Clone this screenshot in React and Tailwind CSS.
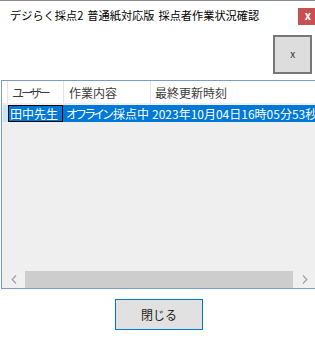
import React from "react";

const font = { fontFamily: '"Noto Sans CJK JP", "Noto Sans", sans-serif' };

export default function App() {
  return (
    <div className="w-[315px] h-[339px] bg-white flex overflow-hidden" style={font}>
      <div className="w-[2px] h-full bg-[#e4e4e4]" />
      <div className="flex-1 flex flex-col border-t border-[#8c8c8c]">
        {/* title row */}
        <div className="h-[34px] flex items-start justify-between">
          <div className="pl-[10px] pt-[6px] text-[11.2px] leading-[16px] text-black whitespace-nowrap flex">
            <span>デジらく採点2</span>
            <span className="ml-[4px]">普通紙対応版</span>
            <span className="ml-[4px]">採点者作業状況確認</span>
          </div>
          <div className="mt-[7px] mr-[1px] w-[19px] h-[17px] bg-[#c75050] flex items-center justify-center text-white text-[11px] font-bold leading-none pb-[2px]">
            x
          </div>
        </div>
        {/* square x button */}
        <div className="flex justify-end pr-[6px]">
          <div className="w-[39px] h-[39px] bg-[#dddddd] border-2 border-[#777777] flex items-center justify-center text-[10px] text-[#333] leading-none pb-[2px]">
            x
          </div>
        </div>
        {/* list view */}
        <div className="mt-[6px] ml-[1px] h-[209px] border border-[#7a9cc6] flex flex-col bg-[#efefef]">
          <div className="h-[23px] bg-white flex text-[12px] text-[#3c3c3c] leading-[23px] border-b border-[#f0f0f0]">
            <div className="w-[6px] border-r border-[#e5e5e5]" />
            <div className="w-[56px] border-r border-[#e5e5e5] pl-[4px] whitespace-nowrap tracking-[-3px]">ユーザー</div>
            <div className="w-[87px] border-r border-[#e5e5e5] pl-[5px] whitespace-nowrap">作業内容</div>
            <div className="flex-1 pl-[4px] whitespace-nowrap overflow-hidden">最終更新時刻</div>
          </div>
          <div className="mt-[1px] h-[17px] flex text-[12px] text-white leading-[15px]">
            <div className="w-[6px] flex">
              <div className="w-[1px]" />
              <div className="flex-1 bg-[#cce4f7]" />
            </div>
            <div className="w-[55px] bg-[#0078d7] border border-black pl-[1px] whitespace-nowrap overflow-hidden">田中先生</div>
            <div className="w-[87px] bg-[#0078d7] pl-[3px] pt-[1px] whitespace-nowrap overflow-hidden">
              <span className="tracking-[-3px]">オフライン</span>
              <span className="pl-[2px]">採点中</span>
            </div>
            <div className="flex-1 bg-[#0078d7] pl-[2px] pt-[1px] whitespace-nowrap overflow-hidden">2023年10月04日16時05分53秒</div>
          </div>
          <div className="flex-1" />
          <div className="h-[17px] flex bg-[#f0f0f0]">
            <div className="w-[23px] flex items-center justify-center">
              <svg width="6" height="9" viewBox="0 0 6 9"><path d="M5 0.5 L1.2 4.5 L5 8.5" stroke="#a3a3a3" strokeWidth="1.3" fill="none" /></svg>
            </div>
            <div className="flex-1 bg-[#cdcdcd]" />
            <div className="w-[24px] flex items-center justify-center">
              <svg width="6" height="9" viewBox="0 0 6 9"><path d="M1 0.5 L4.8 4.5 L1 8.5" stroke="#a3a3a3" strokeWidth="1.3" fill="none" /></svg>
            </div>
          </div>
        </div>
        {/* close button */}
        <div className="mt-[10px] flex justify-center">
          <div className="w-[88px] h-[31px] bg-[#e1e1e1] border border-[#0078d7] flex items-center justify-center text-[12px] text-[#222] leading-none">
            閉じる
          </div>
        </div>
      </div>
      <div className="w-[2px] h-full bg-[#e4e4e4]" />
    </div>
  );
}
